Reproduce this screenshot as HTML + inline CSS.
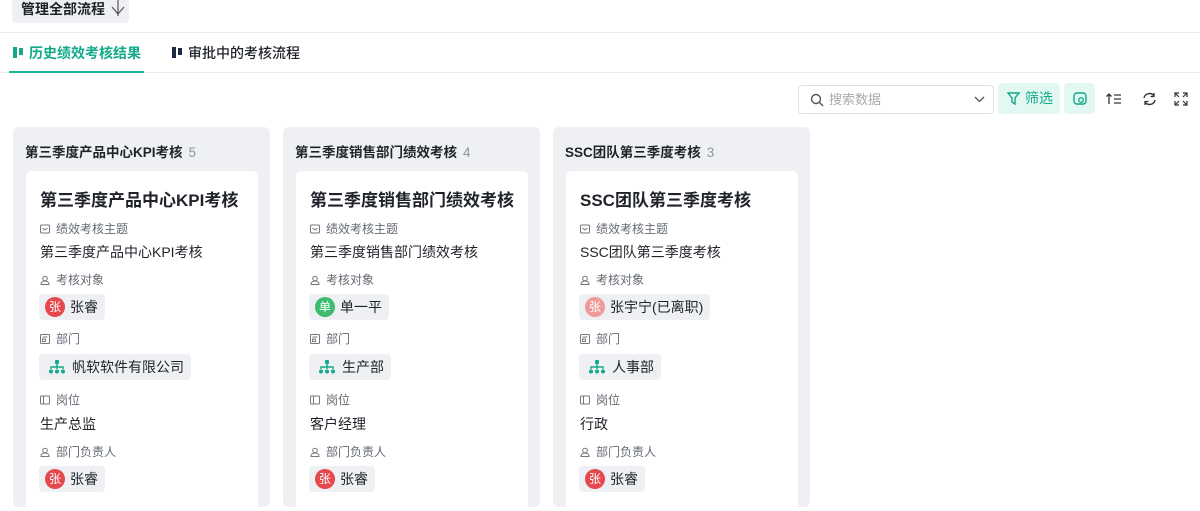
<!DOCTYPE html>
<html><head><meta charset="utf-8"><style>
*{box-sizing:border-box;margin:0;padding:0}
body{width:1200px;height:499px;overflow:hidden;background:#fff;font-family:"Liberation Sans","Noto Sans CJK SC",sans-serif;color:#1f2329;position:relative}
.abs{position:absolute}
.topbtn{left:12px;top:-4px;height:27px;width:117px;background:#eef0f3;border-radius:4px;font-size:14px;font-weight:bold;line-height:27px;padding-left:9px;color:#1f2329}
.tabs{left:0;top:32px;width:1200px;height:41px;border-top:1px solid #e9ebee;border-bottom:1px solid #e9ebee}
.tab{position:absolute;top:11px;font-size:14px;line-height:18px}
.col{top:127px;width:257px;height:380px;background:#eef0f4;border-radius:6px}
.colh{position:absolute;left:12px;top:14px;font-size:13.5px;font-weight:bold;color:#1f2329}
.colh span{font-weight:normal;color:#8f959e;margin-left:6px}
.card{position:absolute;left:13px;top:44px;width:232px;height:340px;background:#fff;border-radius:6px}
.card .t{position:absolute;left:14px;top:15px;font-size:17px;font-weight:bold}
.lbl{position:absolute;left:14px;font-size:12px;color:#646a73;display:flex;align-items:center}
.lbl svg{margin-right:6px}
.val{position:absolute;left:14px;font-size:14px;color:#1f2329}
.chip{position:absolute;left:13px;height:26px;background:#eef0f3;border-radius:4px;display:flex;align-items:center;padding:0 7px 0 6px;font-size:14px}
.av{width:20px;height:20px;border-radius:50%;color:#fff;font-size:12px;text-align:center;line-height:20px;margin-right:5px}
.org{margin:0 7px 0 4px}
</style></head><body>
<svg width="0" height="0" style="position:absolute"><defs>
<symbol id="mail" viewBox="0 0 10 10"><rect x="0.5" y="1" width="9" height="8" rx="1" fill="none" stroke="#777"/><path d="M2.5 4l2.5 2 2.5-2" fill="none" stroke="#777"/></symbol>
<symbol id="user" viewBox="0 0 10 10"><circle cx="5" cy="3.5" r="2.3" fill="none" stroke="#777"/><path d="M1 9.5c0-2.5 2-3.5 4-3.5s4 1 4 3.5z" fill="none" stroke="#777"/></symbol>
<symbol id="dept" viewBox="0 0 10 10"><rect x="0.5" y="0.5" width="9" height="9" rx="1" fill="none" stroke="#777"/><path d="M2.5 3h5M2.5 5h3v2.5h-3z" fill="none" stroke="#777"/></symbol>
<symbol id="pos" viewBox="0 0 10 10"><rect x="0.5" y="1" width="9" height="8" rx="1" fill="none" stroke="#777"/><path d="M3.5 1v8" stroke="#777"/></symbol>
<symbol id="org" viewBox="0 0 16 14"><rect x="6" y="0" width="4" height="4" rx="1" fill="#13a98a"/><path d="M8 4v3M2 9V7h12v2M8 7v2" fill="none" stroke="#13a98a" stroke-width="1.4"/><circle cx="2" cy="11.5" r="2" fill="#13a98a"/><circle cx="8" cy="11.5" r="2" fill="#13a98a"/><circle cx="14" cy="11.5" r="2" fill="#13a98a"/></symbol>
</defs></svg>
<div class="abs topbtn">管理全部流程 <svg style="vertical-align:-2px;margin-left:2px" width="14" height="16"><path d="M7 0v16M1 7l6 7 6-7" fill="none" stroke="#555" stroke-width="1.2"/></svg></div>
<div class="abs tabs">
 <div class="tab" style="left:13px;color:#13a98a;font-weight:bold"><span style="display:inline-block;width:4px;height:11px;background:#13a98a;margin-right:2px"></span><span style="display:inline-block;width:4px;height:7px;background:#13a98a;margin-right:6px;vertical-align:3px"></span>历史绩效考核结果</div>
 <div class="abs" style="left:9px;top:38px;width:135px;height:2px;background:#1ab394"></div>
 <div class="tab" style="left:172px;font-weight:500"><span style="display:inline-block;width:4px;height:11px;background:#1f2a44;margin-right:2px"></span><span style="display:inline-block;width:4px;height:7px;background:#1f2a44;margin-right:6px;vertical-align:3px"></span>审批中的考核流程</div>
</div>
<div class="abs" style="left:798px;top:85px;width:196px;height:29px;border:1px solid #dee0e3;border-radius:4px;font-size:13px;color:#aaa;line-height:27px;padding-left:30px">搜索数据
 <svg class="abs" style="left:11px;top:7px" width="14" height="14" viewBox="0 0 14 14"><circle cx="6" cy="6" r="4.5" fill="none" stroke="#555" stroke-width="1.4"/><path d="M9.5 9.5L13 13" stroke="#555" stroke-width="1.4"/></svg>
 <svg class="abs" style="left:175px;top:10px" width="11" height="8"><path d="M1 1l4.5 4.5L10 1" fill="none" stroke="#555" stroke-width="1.3"/></svg></div>
<div class="abs" style="left:998px;top:83px;width:62px;height:31px;background:#e3f7f3;border-radius:4px;color:#13a98a;font-size:14px;line-height:31px;padding-left:27px">筛选
 <svg class="abs" style="left:9px;top:9px" width="13" height="13"><path d="M1 1h11L8 6v6L5 10V6z" fill="none" stroke="#13a98a" stroke-width="1.4"/></svg></div>
<div class="abs" style="left:1064px;top:83px;width:31px;height:31px;background:#e3f7f3;border-radius:4px">
 <svg class="abs" style="left:9px;top:9px" width="14" height="13"><rect x="1" y="1" width="12" height="11" rx="3" fill="none" stroke="#13a98a" stroke-width="1.4"/><circle cx="8" cy="8" r="2.3" fill="none" stroke="#13a98a" stroke-width="1.3"/></svg></div>
<svg class="abs" style="left:1106px;top:93px" width="16" height="12"><path d="M3 11V1M0.5 3.5L3 1l2.5 2.5M8 2h7M8 6h7M8 10h7" fill="none" stroke="#333" stroke-width="1.3"/></svg>
<svg class="abs" style="left:1142px;top:92px" width="15" height="14"><path d="M2 6a5.5 5.5 0 0 1 10-2M13 8a5.5 5.5 0 0 1-10 2" fill="none" stroke="#333" stroke-width="1.4"/><path d="M12 1v3.5H8.5M3 13V9.5h3.5" fill="none" stroke="#333" stroke-width="1.3"/></svg>
<svg class="abs" style="left:1174px;top:92px" width="14" height="14"><path d="M1 5V1h4M9 1h4v4M13 9v4H9M5 13H1V9M1 1l4 4M13 1L9 5M13 13L9 9M1 13l4-4" fill="none" stroke="#333" stroke-width="1.2"/></svg>

<div class="abs col" style="left:13px"><div class="colh">第三季度产品中心KPI考核<span>5</span></div>
<div class="card"><div class="t">第三季度产品中心KPI考核</div>
<div class="lbl" style="top:49px"><svg width="10" height="10"><use href="#mail"/></svg>绩效考核主题</div><div class="val" style="top:71px">第三季度产品中心KPI考核</div>
<div class="lbl" style="top:100px"><svg width="10" height="10"><use href="#user"/></svg>考核对象</div>
<div class="chip" style="top:123px"><div class="av" style="background:#e5484d">张</div>张睿</div>
<div class="lbl" style="top:159px"><svg width="10" height="10"><use href="#dept"/></svg>部门</div>
<div class="chip" style="top:183px"><svg class="org" width="16" height="14"><use href="#org"/></svg>帆软软件有限公司</div>
<div class="lbl" style="top:220px"><svg width="10" height="10"><use href="#pos"/></svg>岗位</div><div class="val" style="top:243px">生产总监</div>
<div class="lbl" style="top:272px"><svg width="10" height="10"><use href="#user"/></svg>部门负责人</div>
<div class="chip" style="top:295px"><div class="av" style="background:#e5484d">张</div>张睿</div>
</div></div>

<div class="abs col" style="left:283px"><div class="colh">第三季度销售部门绩效考核<span>4</span></div>
<div class="card"><div class="t">第三季度销售部门绩效考核</div>
<div class="lbl" style="top:49px"><svg width="10" height="10"><use href="#mail"/></svg>绩效考核主题</div><div class="val" style="top:71px">第三季度销售部门绩效考核</div>
<div class="lbl" style="top:100px"><svg width="10" height="10"><use href="#user"/></svg>考核对象</div>
<div class="chip" style="top:123px"><div class="av" style="background:#3dbb6e">单</div>单一平</div>
<div class="lbl" style="top:159px"><svg width="10" height="10"><use href="#dept"/></svg>部门</div>
<div class="chip" style="top:183px"><svg class="org" width="16" height="14"><use href="#org"/></svg>生产部</div>
<div class="lbl" style="top:220px"><svg width="10" height="10"><use href="#pos"/></svg>岗位</div><div class="val" style="top:243px">客户经理</div>
<div class="lbl" style="top:272px"><svg width="10" height="10"><use href="#user"/></svg>部门负责人</div>
<div class="chip" style="top:295px"><div class="av" style="background:#e5484d">张</div>张睿</div>
</div></div>

<div class="abs col" style="left:553px"><div class="colh">SSC团队第三季度考核<span>3</span></div>
<div class="card"><div class="t">SSC团队第三季度考核</div>
<div class="lbl" style="top:49px"><svg width="10" height="10"><use href="#mail"/></svg>绩效考核主题</div><div class="val" style="top:71px">SSC团队第三季度考核</div>
<div class="lbl" style="top:100px"><svg width="10" height="10"><use href="#user"/></svg>考核对象</div>
<div class="chip" style="top:123px"><div class="av" style="background:#ee9a9a">张</div>张宇宁(已离职)</div>
<div class="lbl" style="top:159px"><svg width="10" height="10"><use href="#dept"/></svg>部门</div>
<div class="chip" style="top:183px"><svg class="org" width="16" height="14"><use href="#org"/></svg>人事部</div>
<div class="lbl" style="top:220px"><svg width="10" height="10"><use href="#pos"/></svg>岗位</div><div class="val" style="top:243px">行政</div>
<div class="lbl" style="top:272px"><svg width="10" height="10"><use href="#user"/></svg>部门负责人</div>
<div class="chip" style="top:295px"><div class="av" style="background:#e5484d">张</div>张睿</div>
</div></div>
</body></html>
